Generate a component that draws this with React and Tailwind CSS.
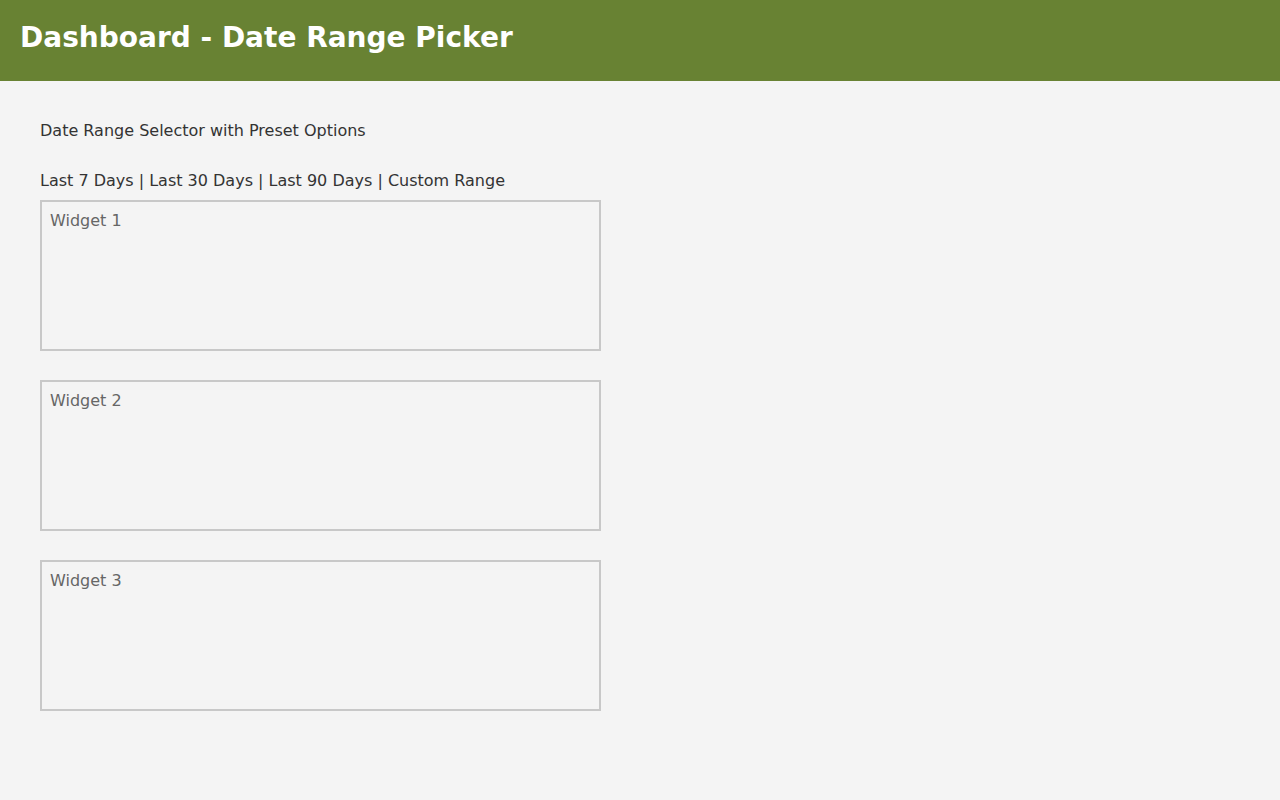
export default function App() {
  const widgets = ['Widget 1', 'Widget 2', 'Widget 3'];

  return (
    <div className="min-h-screen bg-[#f4f4f4]" style={{ fontFamily: '"DejaVu Sans", sans-serif' }}>
      {/* Header */}
      <header className="h-[81px] bg-[#688233] flex items-center px-5 pb-[6px]">
        <h1 className="text-[28px] font-bold text-white leading-none">Dashboard - Date Range Picker</h1>
      </header>

      <main className="px-10 pt-[40px]">
        <p className="text-[16px] leading-5 text-[#333]">Date Range Selector with Preset Options</p>
        <p className="mt-[30px] text-[16px] leading-5 text-[#333]">
          Last 7 Days | Last 30 Days | Last 90 Days | Custom Range
        </p>

        <div className="mt-[9px] flex flex-col gap-[29px]">
          {widgets.map((w) => (
            <div key={w} className="w-[561px] h-[151px] border-2 border-[#c8c8c8] px-2 pt-[9px]">
              <span className="block text-[16px] leading-5 text-[#666]">{w}</span>
            </div>
          ))}
        </div>
      </main>
    </div>
  );
}
